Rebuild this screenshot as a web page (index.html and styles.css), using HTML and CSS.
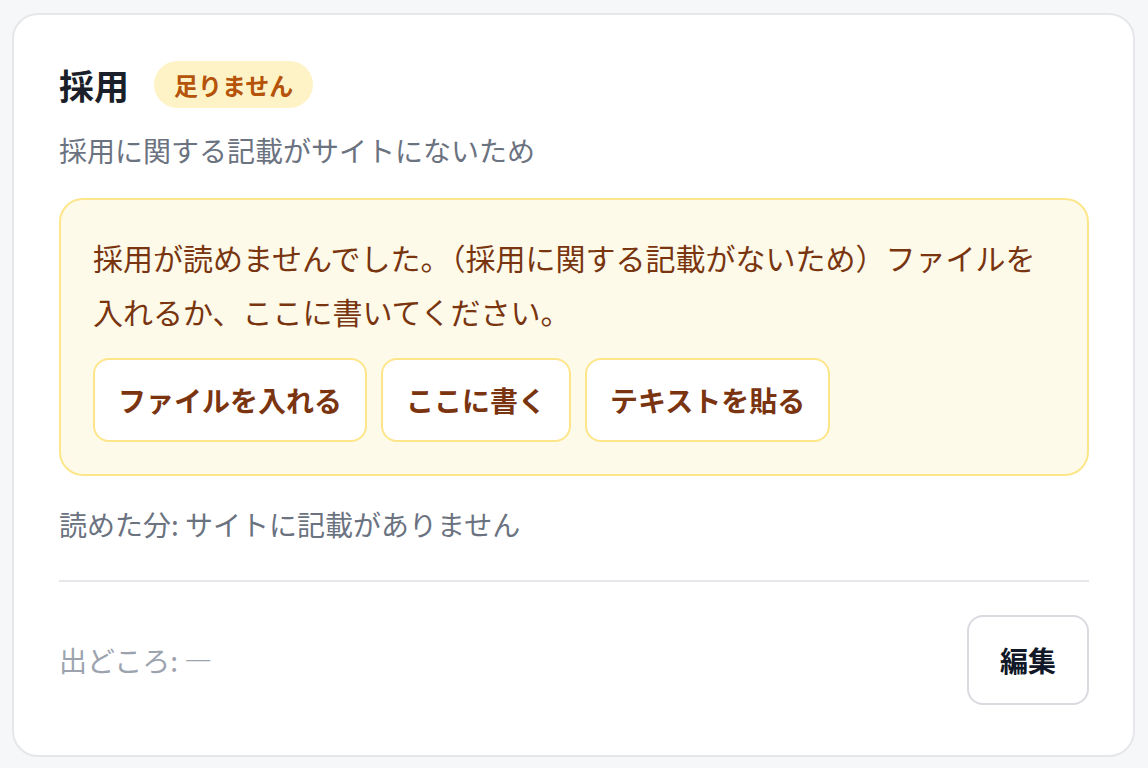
FILE: index.html
```html
<!DOCTYPE html>
<html lang="ja">
<head>
<meta charset="utf-8">
<link rel="stylesheet" href="styles.css">
</head>
<body>
<section class="card">
  <div class="head">
    <h2 class="title">採用</h2>
    <span class="badge">足りません</span>
  </div>
  <p class="sub">採用に関する記載がサイトにないため</p>
  <div class="notice">
    <p class="notice-text">採用が読めませんでした。（採用に関する記載がないため）ファイルを入れるか、ここに書いてください。</p>
    <div class="actions">
      <button class="act">ファイルを入れる</button>
      <button class="act">ここに書く</button>
      <button class="act">テキストを貼る</button>
    </div>
  </div>
  <p class="read">読めた分: サイトに記載がありません</p>
  <hr class="divider">
  <div class="foot">
    <span class="source">出どころ: —</span>
    <button class="edit">編集</button>
  </div>
</section>
</body>
</html>
```

FILE: styles.css
```css
* { box-sizing: border-box; }
html, body { margin: 0; }
body {
  background: #f6f7f9;
  padding: 13px 13px 13px 12px;
  font-family: "Noto Sans CJK JP", "Noto Sans", sans-serif;
}
.card {
  background: #ffffff;
  border: 2px solid #e6e7eb;
  border-radius: 26px;
  padding: 46px 44px 50px 45px;
}
.head {
  display: flex;
  align-items: center;
  gap: 25px;
  height: 47px;
}
.title {
  margin: 0;
  font-size: 35px;
  line-height: 1;
  font-weight: 700;
  color: #1b1f2a;
}
.badge {
  display: inline-flex;
  align-items: center;
  height: 47px;
  padding: 0 20px;
  border-radius: 24px;
  background: #fef3c7;
  color: #b45309;
  font-size: 24px;
  font-weight: 700;
}
.sub {
  margin: 22px 0 0;
  font-size: 28px;
  line-height: 40px;
  color: #6b7280;
}
.notice {
  margin-top: 28px;
  background: #fefae9;
  border: 2px solid #fde68a;
  border-radius: 24px;
  padding: 30px 32px 32px 32px;
}
.notice-text {
  margin: 0;
  font-size: 30px;
  line-height: 54px;
  color: #78350f;
}
.actions {
  display: flex;
  gap: 14px;
  margin-top: 20px;
}
.act {
  height: 84px;
  padding: 0 23px;
  background: #ffffff;
  border: 2px solid #fde68a;
  border-radius: 16px;
  font-family: inherit;
  font-size: 28px;
  font-weight: 700;
  color: #7a3410;
}
.read {
  margin: 28px 0 0;
  font-size: 28px;
  line-height: 40px;
  color: #6b7280;
}
.divider {
  margin: 36px 0 0;
  border: 0;
  border-top: 2px solid #e5e7eb;
}
.foot {
  margin-top: 33px;
  display: flex;
  align-items: center;
  justify-content: space-between;
}
.source {
  font-size: 28px;
  color: #9ca3af;
}
.edit {
  height: 90px;
  padding: 0 31px;
  background: #ffffff;
  border: 2px solid #d9dbe0;
  border-radius: 16px;
  font-family: inherit;
  font-size: 28px;
  font-weight: 600;
  color: #111827;
}
```
